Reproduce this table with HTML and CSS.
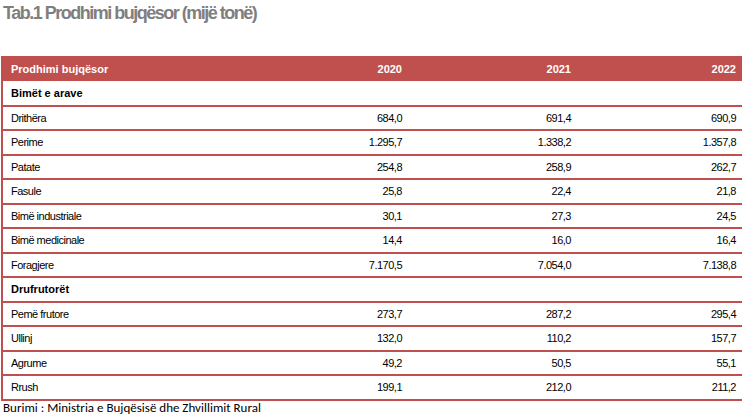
FILE: index.html
```html
<!DOCTYPE html>
<html lang="sq">
<head>
<meta charset="utf-8">
<title>Tab.1 Prodhimi bujqësor</title>
<link rel="stylesheet" href="styles.css">
</head>
<body>
<h1 class="title">Tab.1 Prodhimi bujqësor (mijë tonë)</h1>
<div class="table">
  <div class="row head">
    <div class="label">Prodhimi bujqësor</div>
    <div class="num">2020</div>
    <div class="num">2021</div>
    <div class="num">2022</div>
  </div>
  <div class="row section first"><div class="label">Bimët e arave</div><div></div><div></div><div></div></div>
  <div class="row"><div class="label">Drithëra</div><div class="num">684,0</div><div class="num">691,4</div><div class="num">690,9</div></div>
  <div class="row"><div class="label">Perime</div><div class="num">1.295,7</div><div class="num">1.338,2</div><div class="num">1.357,8</div></div>
  <div class="row"><div class="label">Patate</div><div class="num">254,8</div><div class="num">258,9</div><div class="num">262,7</div></div>
  <div class="row"><div class="label">Fasule</div><div class="num">25,8</div><div class="num">22,4</div><div class="num">21,8</div></div>
  <div class="row"><div class="label">Bimë industriale</div><div class="num">30,1</div><div class="num">27,3</div><div class="num">24,5</div></div>
  <div class="row"><div class="label">Bimë medicinale</div><div class="num">14,4</div><div class="num">16,0</div><div class="num">16,4</div></div>
  <div class="row"><div class="label">Foragjere</div><div class="num">7.170,5</div><div class="num">7.054,0</div><div class="num">7.138,8</div></div>
  <div class="row section"><div class="label">Drufrutorët</div><div></div><div></div><div></div></div>
  <div class="row"><div class="label">Pemë frutore</div><div class="num">273,7</div><div class="num">287,2</div><div class="num">295,4</div></div>
  <div class="row"><div class="label">Ullinj</div><div class="num">132,0</div><div class="num">110,2</div><div class="num">157,7</div></div>
  <div class="row"><div class="label">Agrume</div><div class="num">49,2</div><div class="num">50,5</div><div class="num">55,1</div></div>
  <div class="row"><div class="label">Rrush</div><div class="num">199,1</div><div class="num">212,0</div><div class="num">211,2</div></div>
</div>
<p class="source">Burimi : Ministria e Bujqësisë dhe Zhvillimit Rural</p>
</body>
</html>
```
FILE: styles.css
```css
html, body {
  margin: 0;
  padding: 0;
  background: #ffffff;
}
body {
  width: 742px;
  height: 415px;
  overflow: hidden;
  font-family: "Liberation Sans", Arial, sans-serif;
  color: #000000;
}
.title {
  box-sizing: border-box;
  height: 56px;
  margin: 0;
  padding: 3px 0 0 3px;
  font-size: 18px;
  line-height: 20px;
  font-weight: bold;
  letter-spacing: -1.5px;
  color: #7f7f7f;
}
.table {
  margin-left: 1px;
  width: 740px;
  border-left: 2px solid #c0504d;
}
.row {
  display: grid;
  grid-template-columns: 238px 166px 169px 165px;
  align-items: center;
  height: 22.5px;
  border-bottom: 2px solid #c0504d;
  font-size: 11px;
  letter-spacing: -0.5px;
}
.row.head {
  height: 25px;
  border-bottom: none;
  background: #c0504d;
  color: #ffffff;
  font-weight: bold;
  letter-spacing: 0;
  margin-left: -2px;
  padding-left: 2px;
}
.row.first {
  height: 23.5px;
}
.row.section {
  font-weight: bold;
  letter-spacing: 0;
}
.label {
  padding-left: 8px;
  white-space: nowrap;
}
.num {
  text-align: right;
  padding-right: 5px;
}
.source {
  margin: -1px 0 0 3px;
  font-family: "Carlito", "Liberation Sans Narrow", "Liberation Sans", sans-serif;
  font-size: 13px;
  line-height: 16px;
}
```
